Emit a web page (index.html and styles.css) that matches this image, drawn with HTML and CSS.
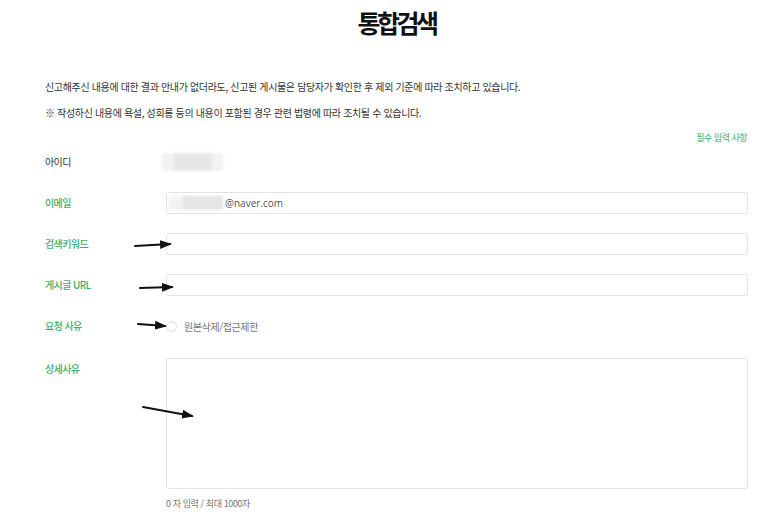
FILE: index.html
```html
<!DOCTYPE html>
<html lang="ko">
<head>
  <meta charset="UTF-8">
  <title>통합검색</title>
  <link rel="stylesheet" href="styles.css">
</head>
<body>
  <div class="page">
    <h1 class="title">통합검색</h1>

    <div class="notice">
      <p>신고해주신 내용에 대한 결과 안내가 없더라도, 신고된 게시물은 담당자가 확인한 후 제외 기준에 따라 조치하고 있습니다.</p>
      <p>※ 작성하신 내용에 욕설, 성희롱 등의 내용이 포함된 경우 관련 법령에 따라 조치될 수 있습니다.</p>
    </div>

    <div class="required">필수 입력 사항</div>

    <div class="form">
      <div class="row">
        <div class="label">아이디</div>
        <div class="field">
          <div class="blur-id"><span></span></div>
        </div>
      </div>

      <div class="row">
        <div class="label green">이메일</div>
        <div class="field">
          <div class="input">
            <span class="blur-mail"><span></span></span>
            <span class="mail">@naver.com</span>
          </div>
        </div>
      </div>

      <div class="row">
        <div class="label green">검색키워드</div>
        <div class="field"><div class="input"></div></div>
      </div>

      <div class="row">
        <div class="label green">게시글 URL</div>
        <div class="field"><div class="input"></div></div>
      </div>

      <div class="row">
        <div class="label green">요청 사유</div>
        <div class="field">
          <label class="radio"><span class="circle"></span>원본삭제/접근제한</label>
        </div>
      </div>

      <div class="row row-top">
        <div class="label green">상세사유</div>
        <div class="field">
          <div class="textarea"></div>
          <div class="counter">0 자 입력 / 최대 1000자</div>
        </div>
      </div>
    </div>
  </div>

  <svg class="marks" width="773" height="513" viewBox="0 0 773 513">
    <defs>
      <marker id="head" markerWidth="6" markerHeight="6" refX="5" refY="3" orient="auto" markerUnits="strokeWidth">
        <path d="M0,0.8 L6,3 L0,5.2 Z" fill="#111"/>
      </marker>
    </defs>
    <g stroke="#111" stroke-width="2" stroke-linecap="round" marker-end="url(#head)">
      <line x1="135" y1="246" x2="170" y2="244"/>
      <line x1="140" y1="288" x2="172" y2="287"/>
      <line x1="138" y1="324" x2="165" y2="326"/>
      <line x1="143" y1="407" x2="192" y2="416"/>
    </g>
  </svg>
</body>
</html>
```

FILE: styles.css
```css
* {
  box-sizing: border-box;
}

body {
  margin: 0;
  background: #fff;
  color: #333;
  font-family: "Noto Sans CJK KR", "Noto Sans", sans-serif;
}

.page {
  padding: 0 25px 0 45px;
  width: 773px;
}

.title {
  margin: 6px 0 0;
  text-align: center;
  font-size: 25px;
  line-height: 32px;
  font-weight: 700;
  letter-spacing: -3.5px;
  color: #111;
}

.notice {
  margin-top: 41px;
}

.notice p {
  margin: 0 0 10px;
  font-size: 10px;
  line-height: 16px;
  letter-spacing: -0.35px;
  color: #333;
}

.required {
  margin-top: -1px;
  text-align: right;
  font-size: 9px;
  line-height: 16px;
  letter-spacing: -0.5px;
  color: #3aae6b;
  padding-right: 1px;
}

.form {
  margin-top: 5px;
  display: flex;
  flex-direction: column;
  gap: 19px;
}

.row {
  display: flex;
  align-items: center;
  min-height: 22px;
}

.row-top {
  align-items: flex-start;
  margin-top: 2px;
}

.label {
  width: 121px;
  flex-shrink: 0;
  font-size: 10px;
  line-height: 22px;
  letter-spacing: -0.6px;
  color: #333;
}

.label.green {
  color: #3aae6b;
  font-weight: 500;
}

.field {
  flex: 1;
}

.input {
  height: 22px;
  border: 1px solid #e3e3e3;
  border-radius: 3px;
  display: flex;
  align-items: center;
  padding-left: 2px;
}

.blur-id {
  width: 61px;
  height: 18px;
  margin-left: -4px;
  background: #f2f2f2;
  filter: blur(1.5px);
  display: flex;
  justify-content: center;
  align-items: center;
}

.blur-id span {
  width: 38px;
  height: 18px;
  background: #e6e6e6;
}

.blur-mail {
  width: 54px;
  height: 14px;
  background: #f3f3f3;
  filter: blur(1.5px);
  display: flex;
  justify-content: flex-end;
}

.blur-mail span {
  width: 40px;
  height: 14px;
  background: #e4e4e4;
}

.mail {
  margin-left: 2px;
  font-family: "Open Sans", "Noto Sans", sans-serif;
  font-size: 10px;
  color: #555;
}

.radio {
  display: flex;
  align-items: center;
  gap: 7px;
  font-size: 10px;
  letter-spacing: -0.4px;
  color: #777;
}

.circle {
  width: 11px;
  height: 11px;
  border: 1px solid #dcdcdc;
  border-radius: 50%;
  background: #fff;
}

.textarea {
  height: 131px;
  border: 1px solid #e3e3e3;
  border-radius: 3px;
}

.counter {
  margin-top: 7px;
  font-size: 9px;
  line-height: 16px;
  letter-spacing: -0.4px;
  color: #777;
}

.marks {
  position: absolute;
  top: 0;
  left: 0;
  pointer-events: none;
}
```
